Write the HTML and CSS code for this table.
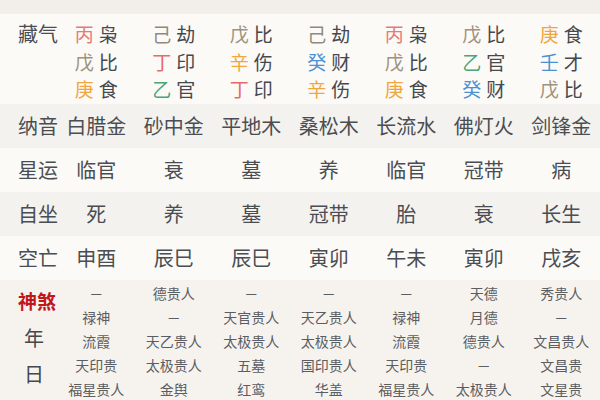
FILE: index.html
```html
<!DOCTYPE html>
<html lang="zh">
<head>
<meta charset="utf-8">
<link rel="stylesheet" href="styles.css">
</head>
<body>
<div class="table">
  <div class="strip"></div>

  <div class="row hidden">
    <div class="label">藏气</div>
    <div class="cell"><div class="pair"><span class="bing">丙</span><span>枭</span></div><div class="pair"><span class="wu">戊</span><span>比</span></div><div class="pair"><span class="geng">庚</span><span>食</span></div></div>
    <div class="cell"><div class="pair"><span class="ji">己</span><span>劫</span></div><div class="pair"><span class="ding">丁</span><span>印</span></div><div class="pair"><span class="yi">乙</span><span>官</span></div></div>
    <div class="cell"><div class="pair"><span class="wu">戊</span><span>比</span></div><div class="pair"><span class="xin">辛</span><span>伤</span></div><div class="pair"><span class="ding">丁</span><span>印</span></div></div>
    <div class="cell"><div class="pair"><span class="ji">己</span><span>劫</span></div><div class="pair"><span class="gui">癸</span><span>财</span></div><div class="pair"><span class="xin">辛</span><span>伤</span></div></div>
    <div class="cell"><div class="pair"><span class="bing">丙</span><span>枭</span></div><div class="pair"><span class="wu">戊</span><span>比</span></div><div class="pair"><span class="geng">庚</span><span>食</span></div></div>
    <div class="cell"><div class="pair"><span class="wu">戊</span><span>比</span></div><div class="pair"><span class="yi">乙</span><span>官</span></div><div class="pair"><span class="gui">癸</span><span>财</span></div></div>
    <div class="cell"><div class="pair"><span class="geng">庚</span><span>食</span></div><div class="pair"><span class="ren">壬</span><span>才</span></div><div class="pair"><span class="wu">戊</span><span>比</span></div></div>
  </div>

  <div class="row alt">
    <div class="label">纳音</div>
    <div class="cell">白腊金</div><div class="cell">砂中金</div><div class="cell">平地木</div><div class="cell">桑松木</div><div class="cell">长流水</div><div class="cell">佛灯火</div><div class="cell">剑锋金</div>
  </div>

  <div class="row">
    <div class="label">星运</div>
    <div class="cell">临官</div><div class="cell">衰</div><div class="cell">墓</div><div class="cell">养</div><div class="cell">临官</div><div class="cell">冠带</div><div class="cell">病</div>
  </div>

  <div class="row alt">
    <div class="label">自坐</div>
    <div class="cell">死</div><div class="cell">养</div><div class="cell">墓</div><div class="cell">冠带</div><div class="cell">胎</div><div class="cell">衰</div><div class="cell">长生</div>
  </div>

  <div class="row">
    <div class="label">空亡</div>
    <div class="cell">申酉</div><div class="cell">辰巳</div><div class="cell">辰巳</div><div class="cell">寅卯</div><div class="cell">午未</div><div class="cell">寅卯</div><div class="cell">戌亥</div>
  </div>

  <div class="row shensha">
    <div class="label sslabel">
      <div class="sstitle">神煞</div>
      <div class="ssday">年</div>
      <div class="ssday">日</div>
    </div>
    <div class="cell"><div>－</div><div>禄神</div><div>流霞</div><div>天印贵</div><div>福星贵人</div></div>
    <div class="cell"><div>德贵人</div><div>－</div><div>天乙贵人</div><div>太极贵人</div><div>金舆</div></div>
    <div class="cell"><div>－</div><div>天官贵人</div><div>太极贵人</div><div>五墓</div><div>红鸾</div></div>
    <div class="cell"><div>－</div><div>天乙贵人</div><div>太极贵人</div><div>国印贵人</div><div>华盖</div></div>
    <div class="cell"><div>－</div><div>禄神</div><div>流霞</div><div>天印贵</div><div>福星贵人</div></div>
    <div class="cell"><div>天德</div><div>月德</div><div>德贵人</div><div>－</div><div>太极贵人</div></div>
    <div class="cell"><div>秀贵人</div><div>－</div><div>文昌贵人</div><div>文昌贵</div><div>文星贵</div></div>
  </div>
</div>
</body>
</html>
```

FILE: styles.css
```css
html, body {
  margin: 0;
  padding: 0;
  background: #fcfaf7;
}
body {
  font-family: "Noto Sans CJK SC", "Noto Sans", sans-serif;
  color: #4a4d52;
  width: 600px;
  height: 400px;
  overflow: hidden;
}
.strip {
  height: 14px;
  background: #f2efeb;
}
.row {
  display: grid;
  grid-template-columns: 57.5px repeat(7, 77.5px);
  height: 44px;
  align-items: center;
  background: #fcfaf7;
  font-size: 20px;
}
.row.alt {
  background: #f4f2ef;
}
.label {
  padding-left: 18px;
  line-height: 24px;
  white-space: nowrap;
}
.cell {
  text-align: center;
  line-height: 24px;
  white-space: nowrap;
}
.row.hidden {
  height: 90px;
  align-items: start;
  padding-top: 6px;
  box-sizing: border-box;
}
.row.hidden .label {
  line-height: 28px;
}
.pair {
  display: flex;
  justify-content: center;
  gap: 5px;
  font-size: 19px;
  line-height: 27.5px;
  color: #45484d;
}
.bing { color: #e57c7c; }
.ding { color: #e56a6a; }
.wu { color: #9e927d; }
.ji { color: #8e8b7c; }
.geng { color: #f0a640; }
.xin { color: #f0a640; }
.yi { color: #4aa676; }
.gui { color: #4a92d6; }
.ren { color: #4a92d6; }

.row.shensha {
  height: 120px;
  align-items: start;
  background: #f6f3ef;
  padding-top: 1px;
  box-sizing: border-box;
}
.shensha .cell {
  font-size: 14px;
  line-height: 24px;
  color: #5a5d62;
}
.sslabel {
  padding-left: 0;
  padding-top: 8px;
  display: flex;
  flex-direction: column;
}
.sstitle {
  padding-left: 18px;
  font-size: 19px;
  font-weight: bold;
  color: #c3161c;
  line-height: 24px;
}
.ssday {
  padding-left: 24px;
  font-size: 20px;
  line-height: 36px;
  color: #45484d;
}
.sstitle + .ssday {
  margin-top: 7px;
}
```
